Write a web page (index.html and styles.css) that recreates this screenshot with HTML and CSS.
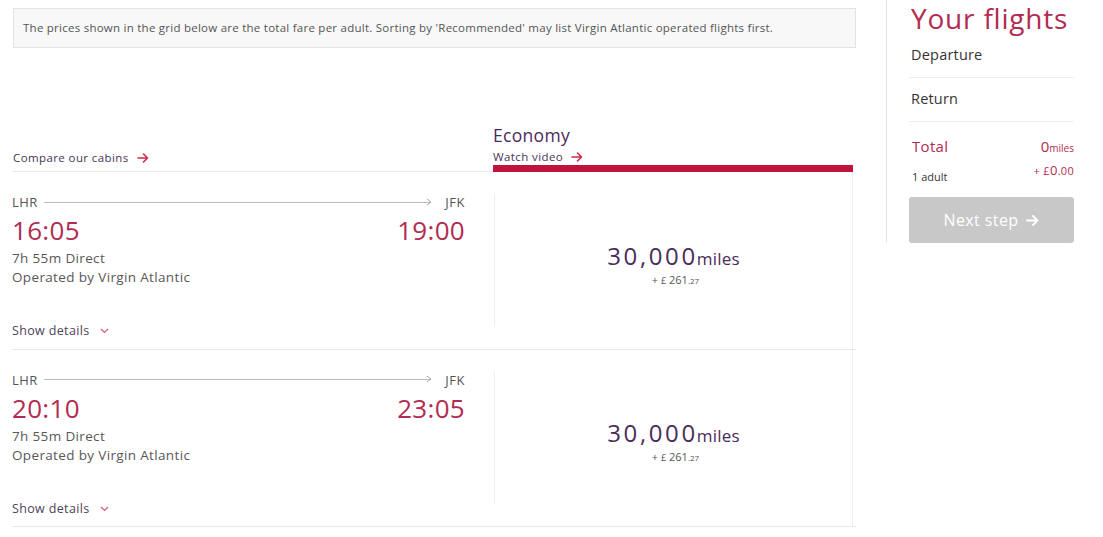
FILE: index.html
```html
<!DOCTYPE html>
<html>
<head>
<meta charset="utf-8">
<link rel="stylesheet" href="styles.css">
</head>
<body>
<div class="page">
  <div class="main">
    <div class="notice">The prices shown in the grid below are the total fare per adult. Sorting by 'Recommended' may list Virgin Atlantic operated flights first.</div>
    <div class="header">
      <div class="header-left">
        <a class="link">Compare our cabins <svg class="arrow" width="12" height="10" viewBox="0 0 12 10"><path d="M1 5H10.5M6.5 1L10.5 5L6.5 9" fill="none" stroke="#d0284a" stroke-width="1.6" stroke-linecap="round" stroke-linejoin="round"/></svg></a>
      </div>
      <div class="header-right">
        <div class="cabin">Economy</div>
        <a class="link">Watch video <svg class="arrow" width="12" height="10" viewBox="0 0 12 10"><path d="M1 5H10.5M6.5 1L10.5 5L6.5 9" fill="none" stroke="#d0284a" stroke-width="1.6" stroke-linecap="round" stroke-linejoin="round"/></svg></a>
        <div class="bar"></div>
      </div>
    </div>

    <div class="row">
      <div class="info">
        <div class="route"><span>LHR</span><span class="line"><svg width="6" height="8" viewBox="0 0 6 8"><path d="M1 1L5 4L1 7" fill="none" stroke="#aaa" stroke-width="1"/></svg></span><span>JFK</span></div>
        <div class="times"><span>16:05</span><span>19:00</span></div>
        <div class="meta first">7h 55m Direct</div>
        <div class="meta">Operated by Virgin Atlantic</div>
        <a class="details">Show details <svg width="9" height="6" viewBox="0 0 9 6"><path d="M1 1L4.5 4.5L8 1" fill="none" stroke="#d45a7a" stroke-width="1.2"/></svg></a>
      </div>
      <div class="price-cell">
        <div class="price">
          <div class="miles"><span class="num">30,000</span><span class="unit">miles</span></div>
          <div class="fee">+ <span class="pound">£</span> 261<span class="pence">.27</span></div>
        </div>
      </div>
    </div>

    <div class="row">
      <div class="info">
        <div class="route"><span>LHR</span><span class="line"><svg width="6" height="8" viewBox="0 0 6 8"><path d="M1 1L5 4L1 7" fill="none" stroke="#aaa" stroke-width="1"/></svg></span><span>JFK</span></div>
        <div class="times"><span>20:10</span><span>23:05</span></div>
        <div class="meta first">7h 55m Direct</div>
        <div class="meta">Operated by Virgin Atlantic</div>
        <a class="details">Show details <svg width="9" height="6" viewBox="0 0 9 6"><path d="M1 1L4.5 4.5L8 1" fill="none" stroke="#d45a7a" stroke-width="1.2"/></svg></a>
      </div>
      <div class="price-cell">
        <div class="price">
          <div class="miles"><span class="num">30,000</span><span class="unit">miles</span></div>
          <div class="fee">+ <span class="pound">£</span> 261<span class="pence">.27</span></div>
        </div>
      </div>
    </div>
  </div>

  <aside class="sidebar">
    <div class="inner">
      <h1 class="title">Your flights</h1>
      <div class="leg">Departure</div>
      <div class="leg">Return</div>
      <div class="total">
        <div class="total-left">
          <div class="total-label">Total</div>
          <div class="adult">1 adult</div>
        </div>
        <div class="total-right">
          <div class="total-miles"><span class="zero">0</span>miles</div>
          <div class="total-fee">+ £<span class="zero-sm">0</span>.00</div>
        </div>
      </div>
      <button class="next">Next step <svg width="13" height="11" viewBox="0 0 13 11"><path d="M1 5.5H11.5M7 1L11.5 5.5L7 10" fill="none" stroke="#fff" stroke-width="1.8" stroke-linecap="round" stroke-linejoin="round"/></svg></button>
    </div>
  </aside>
</div>
</body>
</html>
```
FILE: styles.css
```css
* { box-sizing: border-box; }
body {
  margin: 0;
  background: #fff;
  font-family: "Open Sans", "Liberation Sans", sans-serif;
  color: #555;
}
.page {
  display: flex;
  align-items: flex-start;
  padding-left: 12px;
}
.main {
  width: 844px;
}
.notice {
  margin: 8px 0 0 1px;
  height: 40px;
  border: 1px solid #e3e3e3;
  background: #f8f8f8;
  font-size: 11.5px;
  letter-spacing: 0.25px;
  line-height: 38px;
  padding-left: 9px;
  color: #555;
}
.header {
  display: flex;
  align-items: flex-end;
  height: 124px;
}
.header-left {
  width: 481px;
  border-bottom: 1px solid #e8e8e8;
  padding: 0 0 6px 1px;
}
.header-right {
  width: 360px;
}
.link {
  display: flex;
  align-items: center;
  gap: 8px;
  font-size: 11.5px;
  letter-spacing: 0.4px;
  line-height: 14px;
  color: #4a3552;
}
.cabin {
  font-size: 17.5px;
  letter-spacing: 0.3px;
  line-height: 22px;
  color: #4b2a5c;
  margin-bottom: 4px;
}
.bar {
  height: 7px;
  background: #c0143e;
  margin-top: 1px;
}
.row {
  display: flex;
  height: 177.5px;
  border-bottom: 1px solid #e8e8e8;
}
.info {
  width: 482px;
  padding-top: 22px;
  padding-right: 29px;
}
.route {
  display: flex;
  align-items: center;
  font-size: 13px;
  letter-spacing: 0.5px;
  line-height: 16px;
  color: #555;
}
.line {
  flex: 1;
  height: 1px;
  background: #bcbcbc;
  margin: 0 14px 0 6px;
  position: relative;
}
.line svg {
  position: absolute;
  right: -1px;
  top: -4px;
}
.times {
  display: flex;
  justify-content: space-between;
  margin-top: 5px;
  font-size: 26px;
  line-height: 30px;
  color: #b22c52;
  letter-spacing: 0.3px;
}
.meta {
  font-size: 13.5px;
  letter-spacing: 0.35px;
  line-height: 19px;
  color: #585858;
}
.meta.first { margin-top: 4px; }
.details {
  display: flex;
  align-items: center;
  gap: 10px;
  margin-top: 36px;
  font-size: 12.5px;
  letter-spacing: 0.35px;
  line-height: 16px;
  color: #4f4358;
}
.price-cell {
  width: 359px;
  border-right: 1px solid #eeeeee;
  padding: 21px 0 22px;
}
.price {
  height: 100%;
  border-left: 1px solid #eeeeee;
  display: flex;
  flex-direction: column;
  align-items: center;
  justify-content: center;
  color: #4b2a5c;
  padding-top: 10px;
}
.miles {
  display: flex;
  align-items: baseline;
  line-height: 28px;
}
.num {
  font-size: 24px;
  letter-spacing: 2.6px;
  margin-right: -1px;
  font-weight: 400;
  color: #4a2d5a;
}
.unit {
  font-size: 17px;
  letter-spacing: 0.2px;
}
.fee {
  font-size: 11px;
  line-height: 14px;
  color: #555;
  margin-top: 0;
  margin-left: 4px;
}
.pound { font-size: 9px; }
.pence { font-size: 8px; }
.sidebar {
  margin-left: 30px;
  border-left: 1px solid #e6e6e6;
  height: 243px;
  padding-left: 22px;
}
.inner {
  width: 165px;
}
.title {
  margin: 0;
  font-weight: 400;
  font-size: 28px;
  letter-spacing: 0.8px;
  line-height: 36px;
  color: #b22c52;
  padding-left: 2px;
}
.leg {
  font-size: 14.5px;
  letter-spacing: 0.2px;
  line-height: 20px;
  color: #333;
  padding: 9px 0 12px 2px;
  border-bottom: 1px solid #eeeeee;
}
.leg + .leg { padding-top: 11px; }
.total {
  display: flex;
  justify-content: space-between;
  padding: 14px 0 0 3px;
}
.total-label {
  font-size: 15px;
  letter-spacing: 0.3px;
  line-height: 20px;
  color: #b22c52;
}
.adult {
  font-size: 11px;
  line-height: 14px;
  color: #333;
  margin-top: 14px;
}
.total-right {
  text-align: right;
}
.total-miles {
  font-size: 10px;
  line-height: 20px;
  color: #b22c52;
}
.zero { font-size: 15px; }
.total-fee {
  font-size: 11px;
  line-height: 14px;
  color: #b22c52;
  margin-top: 5px;
  letter-spacing: 0.3px;
}
.zero-sm { font-size: 13px; }
.next {
  display: flex;
  align-items: center;
  justify-content: center;
  gap: 8px;
  margin: 13px 0 0 0;
  width: 165px;
  height: 46px;
  border: none;
  border-radius: 3px;
  background: #c8c8c8;
  color: #fff;
  font-family: "Open Sans", "Liberation Sans", sans-serif;
  font-size: 16px;
  letter-spacing: 0.4px;
  padding: 0;
}
```
